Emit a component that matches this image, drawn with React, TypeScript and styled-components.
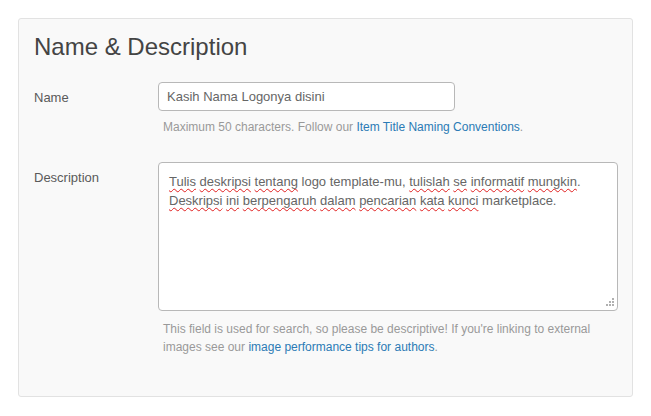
import React from "react";
import styled, { createGlobalStyle } from "styled-components";

const GlobalStyle = createGlobalStyle`
  body {
    margin: 0;
    background: #ffffff;
    font-family: "Liberation Sans", Arial, sans-serif;
  }
`;

const Page = styled.div`
  padding: 18px;
`;

const Panel = styled.section`
  width: 615px;
  height: 379px;
  box-sizing: border-box;
  background: #f9f9f9;
  border: 1px solid #e2e2e2;
  border-radius: 3px;
  padding: 13px 15px 0 15px;
`;

const Title = styled.h2`
  margin: 0 0 20px 0;
  font-size: 24px;
  line-height: 30px;
  font-weight: normal;
  color: #444444;
`;

const Row = styled.div<{ $gap?: number }>`
  display: grid;
  grid-template-columns: 124px 1fr;
  margin-bottom: ${(p) => p.$gap ?? 0}px;
`;

const Label = styled.label`
  padding-top: 6px;
  font-size: 13px;
  line-height: 19px;
  color: #5a5a5a;
`;

const Field = styled.div`
  display: flex;
  flex-direction: column;
`;

const Input = styled.div`
  width: 297px;
  height: 29px;
  box-sizing: border-box;
  border: 1px solid #b8b8b8;
  border-radius: 4px;
  background: #ffffff;
  padding: 0 8px;
  font-size: 13px;
  line-height: 27px;
  color: #666666;
`;

const TextArea = styled.div`
  position: relative;
  width: 460px;
  height: 149px;
  box-sizing: border-box;
  border: 1px solid #b8b8b8;
  border-radius: 4px;
  background: #ffffff;
  padding: 9px 10px;
  font-size: 13px;
  line-height: 19px;
  color: #666666;
`;

const Typo = styled.span`
  text-decoration: underline wavy #e02020;
  text-decoration-thickness: 1px;
  text-decoration-skip-ink: none;
  text-underline-offset: 2px;
`;

const Grip = styled.svg`
  position: absolute;
  right: 2px;
  bottom: 2px;
`;

const Help = styled.p<{ $top: number }>`
  margin: ${(p) => p.$top}px 0 0 0;
  padding-left: 5px;
  font-size: 12px;
  line-height: 18px;
  color: #999999;
`;

const Link = styled.a`
  color: #2b7bb5;
  text-decoration: none;
`;

const misspelled = (text: string) =>
  text.split(/(\s+)/).map((w, i) => {
    const clean = w.replace(/[.,]/g, "");
    const ok = ["logo", "template-mu", "marketplace"].includes(clean);
    if (!w.trim() || ok) return <React.Fragment key={i}>{w}</React.Fragment>;
    const trail = w.endsWith(".") || w.endsWith(",") ? w.slice(-1) : "";
    return (
      <React.Fragment key={i}>
        <Typo>{clean}</Typo>
        {trail}
      </React.Fragment>
    );
  });

export default function App() {
  return (
    <Page>
      <GlobalStyle />
      <Panel>
        <Title>Name &amp; Description</Title>
        <Row $gap={26}>
          <Label>Name</Label>
          <Field>
            <Input>Kasih Nama Logonya disini</Input>
            <Help $top={7}>
              Maximum 50 characters. Follow our{" "}
              <Link href="#">Item Title Naming Conventions</Link>.
            </Help>
          </Field>
        </Row>
        <Row>
          <Label>Description</Label>
          <Field>
            <TextArea>
              {misspelled(
                "Tulis deskripsi tentang logo template-mu, tulislah se informatif mungkin."
              )}
              <br />
              {misspelled(
                "Deskripsi ini berpengaruh dalam pencarian kata kunci marketplace."
              )}
              <Grip width="10" height="10" viewBox="0 0 10 10">
                <g fill="#b0b0b0">
                  <rect x="7" y="0" width="2" height="2" />
                  <rect x="4" y="3" width="2" height="2" />
                  <rect x="7" y="3" width="2" height="2" />
                  <rect x="1" y="6" width="2" height="2" />
                  <rect x="4" y="6" width="2" height="2" />
                  <rect x="7" y="6" width="2" height="2" />
                </g>
              </Grip>
            </TextArea>
            <Help $top={9}>
              This field is used for search, so please be descriptive! If you're linking to
              external images see our{" "}
              <Link href="#">image performance tips for authors</Link>.
            </Help>
          </Field>
        </Row>
      </Panel>
    </Page>
  );
}
